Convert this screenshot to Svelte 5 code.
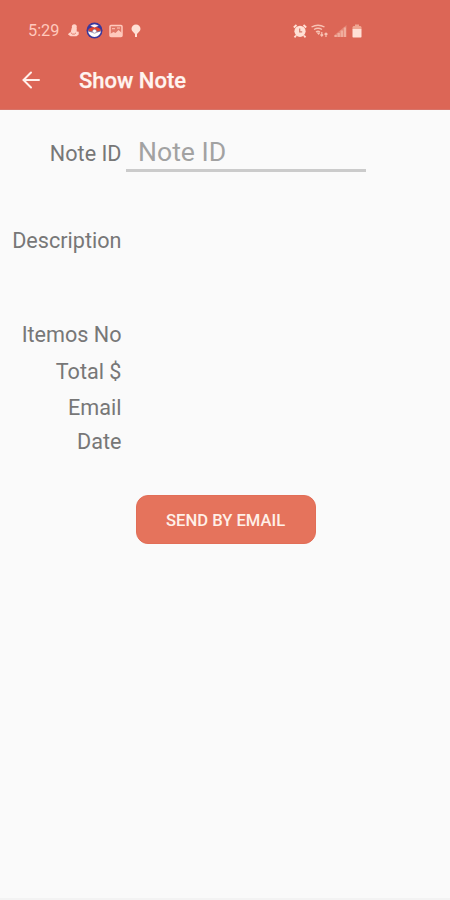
<script>
  const details = [
    { label: 'Itemos No', height: 37 },
    { label: 'Total $', height: 36 },
    { label: 'Email', height: 36 },
    { label: 'Date', height: 33 }
  ];
</script>

<div class="screen">
  <header>
    <div class="status">
      <span class="time">5:29</span>
      <div class="notifications">
        <svg width="13" height="15" viewBox="0 0 13 15" fill="#ffd3c8">
          <circle cx="7.3" cy="3.8" r="2.5" />
          <path d="M4.7 5h5v3.5l2 .2v2.8L9.5 13.2h-6L1 11.5 2 10l1.7-.7z" />
          <path d="M4 9.8l1.5 1.3h2l1.5-1.3" stroke="#dc6656" stroke-width=".8" fill="none" />
        </svg>
        <svg width="17" height="17" viewBox="0 0 17 17">
          <circle cx="8.5" cy="8.5" r="8" fill="#39379b" />
          <path d="M2 8.5h13a6.5 6.5 0 0 1-13 0z" fill="#fff" />
          <path d="M2 8.5Q3 5 8.5 5T15 8.5l-4 1.2H6z" fill="#e3432b" />
          <path d="M4.3 3.8Q8.5.8 12.7 3.8L8.5 5.4z" fill="#fff4f4" />
          <path d="M2.2 9l4.5 1.2M14.8 9l-4.5 1.2" stroke="#4b4383" stroke-width=".8" />
          <circle cx="8.5" cy="9.2" r="2" fill="#fff" stroke="#77729a" stroke-width=".6" />
        </svg>
        <svg width="14" height="14" viewBox="0 0 14 14">
          <rect x="1" y="1.5" width="12" height="11" rx="1" fill="#e07666" stroke="#ffc9bc" stroke-width="1.5" />
          <path d="M1 10l3.5-2 2 1 3-3L13 9v3H1z" fill="#ffc9bc" />
          <path d="M3 4.7h3M8 4h3" stroke="#ffc9bc" stroke-width="1" />
        </svg>
        <svg width="10" height="14" viewBox="0 0 10 14" fill="#ffe0d5">
          <path d="M5 .5A4.5 4.5 0 0 0 .5 5C.5 7.2 3.1 8.5 4 10v3h2v-3c.9-1.5 3.5-2.8 3.5-5A4.5 4.5 0 0 0 5 .5z" />
        </svg>
      </div>
      <div class="system">
        <svg width="14" height="14" viewBox="0 0 14 14" fill="none" stroke="#ffe0d5">
          <circle cx="7" cy="7.3" r="5.6" fill="#ffe0d5" stroke="none" />
          <path d="M.8 3.5L3.5 1M13.2 3.5L10.5 1M3 11.5l-1.5 1.8M11 11.5l1.5 1.8" stroke-width="1.8" />
          <path d="M6.7 4.5v3.3h2.5" stroke="#d5796a" stroke-width="1.2" />
        </svg>
        <svg width="18" height="14" viewBox="0 0 18 14" fill="none" stroke="#f8c3b4" stroke-width="1.4">
          <path d="M.5 3Q7-.6 13.5 3M3 5.5q4-2.5 8 0M5 8q2-1.5 4 0" />
          <path d="M5.5 8.5h4L7.7 11z" fill="#f8c3b4" stroke="none" />
          <path d="M10.8 8v4M9.5 10.5L10.8 12l1.3-1.5M15 13V9M13.5 10.5L15 9l1.5 1.5" stroke-width="1.2" />
        </svg>
        <svg width="14" height="14" viewBox="0 0 14 14" fill="#f0ae9d">
          <path d="M.5 11h2.3v2H.5zM3.5 9h2.4v4H3.5zM6.6 6.5h2.4V13H6.6zM9.8 3.5H12V13H9.8z" />
          <path d="M.5 11L12.5 1v12H.5z" opacity=".45" />
        </svg>
        <svg width="10" height="14" viewBox="0 0 10 14">
          <path d="M3 .5h4V2h1.5l1 1v3h-9V3l1-1H3z" fill="#f0a793" />
          <rect x=".5" y="5" width="9" height="8.5" rx=".7" fill="#ffe0d6" />
        </svg>
      </div>
    </div>
    <div class="toolbar">
      <svg width="18" height="18" viewBox="0 0 18 18" fill="none" stroke="#fff0eb" stroke-width="2" stroke-linecap="round">
        <path d="M17 9H2M9 1.5L1.5 9 9 16.5" />
      </svg>
      <h1>Show Note</h1>
    </div>
  </header>

  <main>
    <div class="note-row">
      <label for="note-id">Note ID</label>
      <input id="note-id" placeholder="Note ID" />
    </div>
    <div class="row description"><span>Description</span></div>
    <div class="details">
      {#each details as field}
        <div class="row" style:height="{field.height}px"><span>{field.label}</span></div>
      {/each}
    </div>
    <button>SEND BY EMAIL</button>
  </main>
</div>

<style>
  :global(body) { margin: 0; background: #fafafa; }
  .screen {
    width: 450px;
    height: 900px;
    box-sizing: border-box;
    overflow: hidden;
    background: #fafafa;
    border-bottom: 2px solid #f3f3f3;
    font-family: Roboto, "Liberation Sans", sans-serif;
  }
  header {
    height: 110px;
    box-sizing: border-box;
    background: #dc6656;
    border-bottom: 1px solid #d77469;
  }
  svg { display: block; flex: none; }
  .status {
    height: 50px;
    box-sizing: border-box;
    padding: 11px 0 0 28px;
    display: flex;
    align-items: center;
  }
  .time { width: 39px; font-size: 16.3px; line-height: 20px; color: #ffc9bd; }
  .notifications { display: flex; align-items: center; gap: 6px; width: 226px; }
  .notifications svg:last-child { margin-left: 2px; }
  .system { display: flex; align-items: center; gap: 4px; }
  .system svg:nth-child(3) { margin-left: 1px; }
  .toolbar { height: 60px; display: flex; align-items: center; padding-left: 22px; }
  h1 {
    margin: 1px 0 0 39px;
    font-size: 22px;
    line-height: 28px;
    font-weight: 500;
    -webkit-text-stroke: .25px #fff4f0;
    color: #fff4f0;
  }
  main { display: flex; flex-direction: column; padding-top: 20px; }
  .note-row { display: flex; height: 50px; }
  label, .row span {
    width: 121.5px;
    text-align: right;
    font-size: 21.6px;
    color: #777;
    white-space: nowrap;
  }
  label { line-height: 47px; }
  input {
    width: 240px;
    height: 42px;
    box-sizing: border-box;
    margin-left: 4.5px;
    padding: 4px 0 0 12px;
    border: 0;
    border-bottom: 3px solid #cbcbcb;
    background: transparent;
    font: 400 26.6px Roboto, "Liberation Sans", sans-serif;
    outline: none;
  }
  input::placeholder { color: #a2a2a2; opacity: 1; }
  .row { display: flex; align-items: center; }
  .description { height: 120px; }
  .details { padding-top: 16px; }
  button {
    width: 180px;
    height: 49px;
    margin: 37px 0 0 135.6px;
    border: 1px solid #e26e57;
    border-radius: 12px;
    background: #e5735c;
    color: #fff0e8;
    font: 500 16.6px Roboto, "Liberation Sans", sans-serif;
    padding: 2px 0 0;
  }
</style>
